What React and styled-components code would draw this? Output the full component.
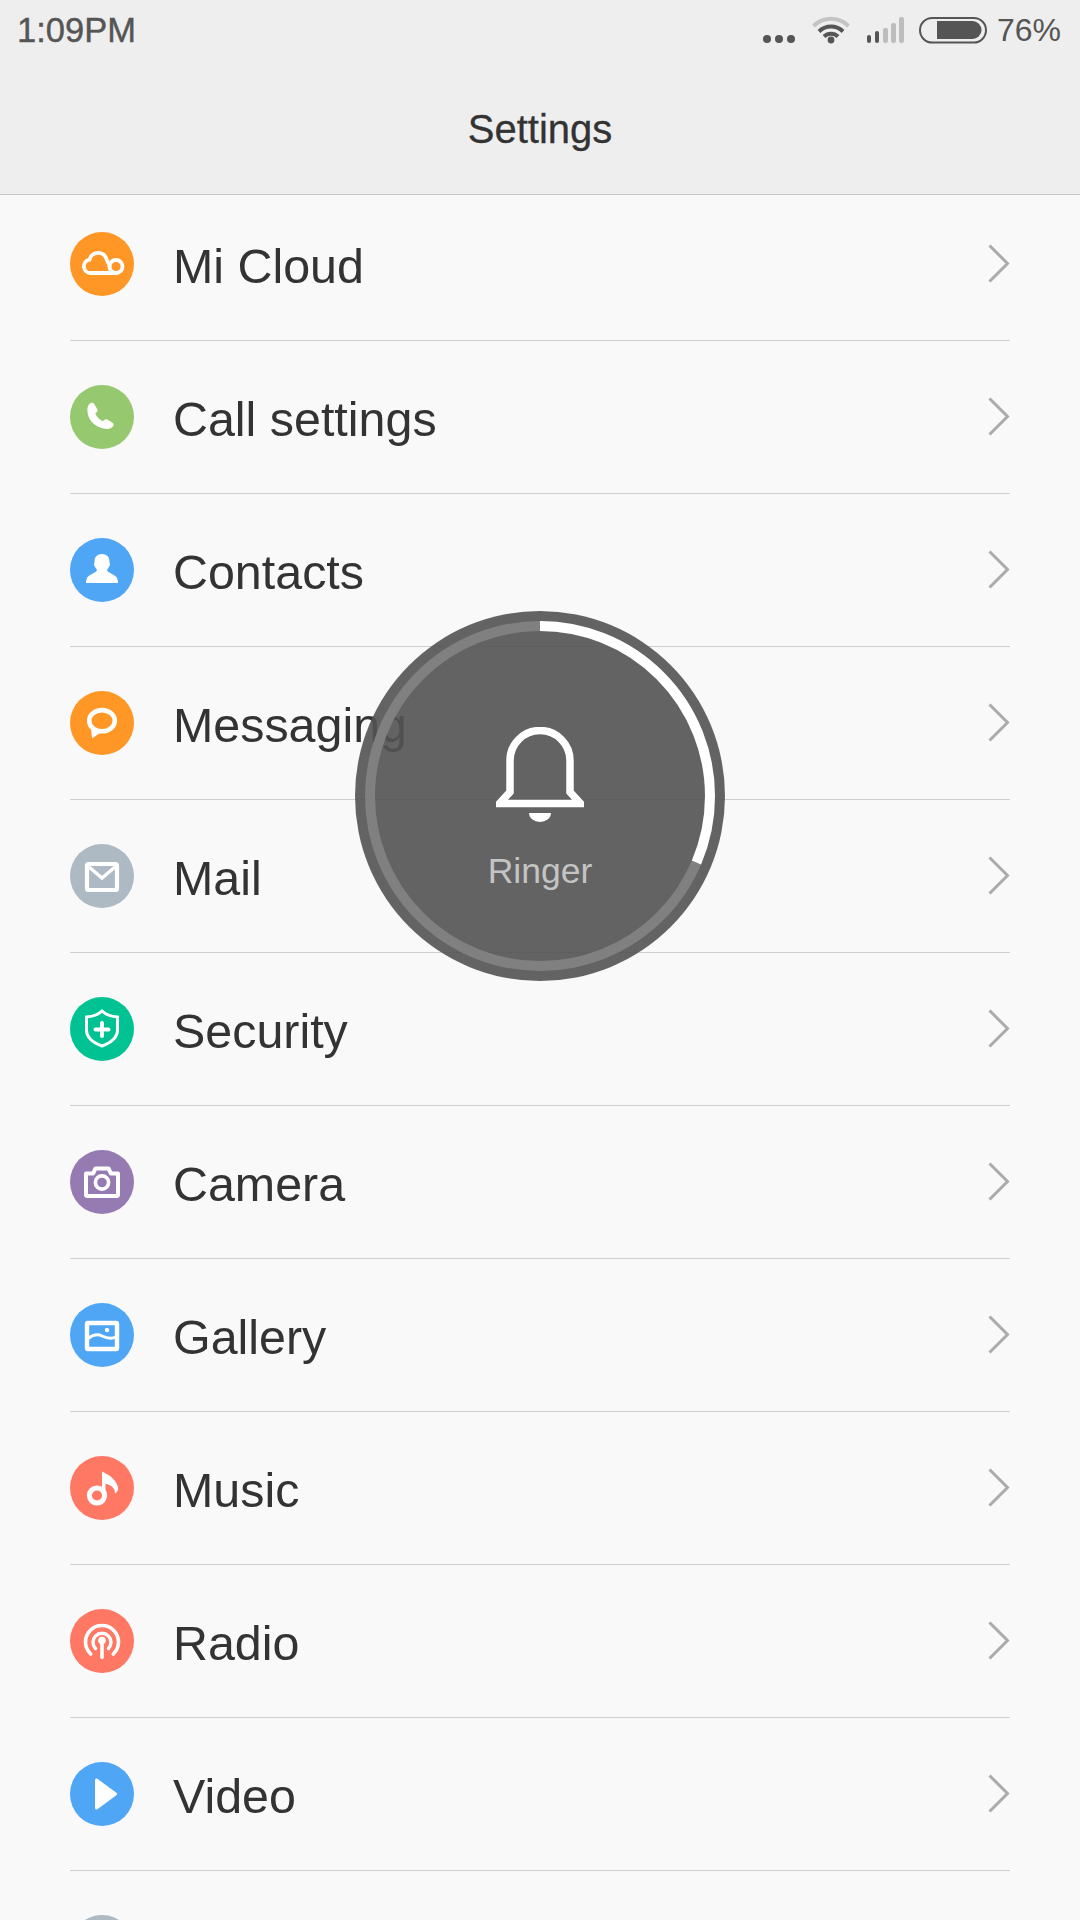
import React from "react";
import styled, { createGlobalStyle } from "styled-components";

const items = [
  { label: "Mi Cloud", color: "#ff9727", icon: "cloud" },
  { label: "Call settings", color: "#96c86f", icon: "phone" },
  { label: "Contacts", color: "#4fa6f5", icon: "contact" },
  { label: "Messaging", color: "#ff9727", icon: "message" },
  { label: "Mail", color: "#adb9c3", icon: "mail" },
  { label: "Security", color: "#00c292", icon: "shield" },
  { label: "Camera", color: "#967bb3", icon: "camera" },
  { label: "Gallery", color: "#4fa6f5", icon: "gallery" },
  { label: "Music", color: "#ff7864", icon: "music" },
  { label: "Radio", color: "#ff7864", icon: "radio" },
  { label: "Video", color: "#4fa6f5", icon: "video" },
  { label: "", color: "#adb9c3", icon: null },
];

const glyphs = {
  cloud: (
    <>
      <path
        d="M46 41H20.5A6.7 6.7 0 0 1 19.5 27.7A8.8 8.8 0 0 1 36.5 27C37 30 39.5 31 39.5 34.5"
        fill="none"
        stroke="#fff"
        strokeWidth="3.8"
        strokeLinecap="round"
      />
      <circle cx="46" cy="34.5" r="6.5" fill="none" stroke="#fff" strokeWidth="3.8" />
    </>
  ),
  phone: (
    <path
      d="M20 18.5c1.8-1.2 3.5-.9 4.4.7l2.9 5c.6 1.1.3 2.2-.6 3l-1.4 1.2c1.5 3.4 4 6 7.4 7.8l1.5-1.3c.9-.8 2.1-.9 3.1-.3l5.2 3.2c1.4.9 1.5 2.6.4 3.8-1.6 1.8-3.8 2.7-6.2 2.4C24 42.8 17 34 17.4 24c.1-2.3 1-4.2 2.6-5.5z"
      fill="#fff"
    />
  ),
  contact: (
    <path
      d="M32 16C36.5 16 39.5 19 39.5 23C39.5 24 39.4 25 39.8 25.6C40.4 26.4 40 27.6 39.2 28.2C38.8 29.4 38 30.4 37.4 31.2C36.8 32.4 37.4 33.4 38.6 34L45 37.8C46.2 38.6 47 39.6 47.4 41L48 43.4C48.2 44.4 47.7 45 46.8 45H17.2C16.3 45 15.8 44.4 16 43.4L16.6 41C17 39.6 17.8 38.6 19 37.8L25.4 34C26.6 33.4 27.2 32.4 26.6 31.2C26 30.4 25.2 29.4 24.8 28.2C24 27.6 23.6 26.4 24.2 25.6C24.6 25 24.5 24 24.5 23C24.5 19 27.5 16 32 16Z"
      fill="#fff"
    />
  ),
  message: (
    <>
      <ellipse cx="32" cy="29.7" rx="12.8" ry="10.6" fill="none" stroke="#fff" strokeWidth="4.6" />
      <path d="M21 37L22 47.5L30 42Z" fill="#fff" />
    </>
  ),
  mail: (
    <>
      <rect x="17" y="20" width="30" height="26" rx="1.5" fill="none" stroke="#fff" strokeWidth="4.2" />
      <path d="M19 23 L32 34 L45 23" fill="none" stroke="#fff" strokeWidth="3.4" />
    </>
  ),
  shield: (
    <>
      <path
        d="M32 14C28 18 22 19.5 16.5 20V33C16.5 41 24 46 32 49C40 46 47.5 41 47.5 33V20C42 19.5 36 18 32 14Z"
        fill="none"
        stroke="#fff"
        strokeWidth="3"
      />
      <path d="M25.5 32.5H38.5M32 26V39" stroke="#fff" strokeWidth="4" strokeLinecap="round" />
    </>
  ),
  camera: (
    <>
      <path
        d="M16 23.5H23L25.5 18.5H38.5L41 23.5H48V44.5A1.5 1.5 0 0 1 46.5 46H17.5A1.5 1.5 0 0 1 16 44.5Z"
        fill="none"
        stroke="#fff"
        strokeWidth="4"
        strokeLinejoin="round"
      />
      <circle cx="32" cy="32.5" r="6.6" fill="none" stroke="#fff" strokeWidth="3.6" />
    </>
  ),
  gallery: (
    <>
      <rect x="17" y="20" width="30" height="26" rx="1" fill="none" stroke="#fff" strokeWidth="4.4" />
      <circle cx="37" cy="27" r="2.2" fill="#fff" />
      <path d="M18 35.5C24 31 28 31 32 33C36 35 41 36.5 46 34" fill="none" stroke="#fff" strokeWidth="3" />
    </>
  ),
  music: (
    <>
      <circle cx="27" cy="39.5" r="7.6" fill="none" stroke="#fff" strokeWidth="5" />
      <path d="M32 39.5V15.5C40 19 46 24 48 31C48.6 34 47.5 36 45 37.5C45.4 32 40.5 29 35.5 27.5V39.5Z" fill="#fff" />
    </>
  ),
  radio: (
    <>
      <path d="M20.7 45A16.5 16.5 0 1 1 43.3 45" fill="none" stroke="#fff" strokeWidth="3.6" strokeLinecap="round" />
      <path d="M25.5 39.5A9 9 0 1 1 38.5 39.5" fill="none" stroke="#fff" strokeWidth="3.4" strokeLinecap="round" />
      <circle cx="32" cy="31.5" r="3.8" fill="#fff" />
      <path d="M32 32V48.5" stroke="#fff" strokeWidth="3.6" strokeLinecap="round" />
    </>
  ),
  video: <path d="M26.5 18V46L45.5 32Z" fill="#fff" stroke="#fff" strokeWidth="3" strokeLinejoin="round" />,
};

const GlobalStyle = createGlobalStyle`
  html, body {
    margin: 0;
    padding: 0;
    background: #f9f9f9;
  }
`;

const Screen = styled.div`
  position: relative;
  width: 1080px;
  height: 1920px;
  overflow: hidden;
  background: #f9f9f9;
  font-family: "Liberation Sans", Arial, sans-serif;
  color: #333;
`;

const Header = styled.header`
  position: relative;
  z-index: 1;
  box-sizing: border-box;
  height: 195px;
  background: #eeeeee;
  border-bottom: 1px solid #c6c6c6;
`;

const StatusBar = styled.div`
  display: flex;
  align-items: center;
  justify-content: space-between;
  height: 60px;
  padding: 0 19px 0 17px;
`;

const Clock = styled.span`
  font-size: 34.5px;
  color: #555;
  -webkit-text-stroke: 0.4px #555;
`;

const StatusIcons = styled.div`
  display: flex;
  align-items: center;
`;

const Percent = styled.span`
  margin-left: 10px;
  font-size: 32px;
  color: #555;
`;

const Title = styled.h1`
  margin: 0;
  padding-top: 40px;
  text-align: center;
  font-size: 40px;
  font-weight: 400;
  line-height: 58px;
  color: #333;
  -webkit-text-stroke: 0.3px #333;
`;

const List = styled.ul`
  list-style: none;
  margin: -7px 0 0;
  padding: 0 70px;
`;

const Row = styled.li`
  box-sizing: border-box;
  display: flex;
  align-items: center;
  height: 153px;
  border-bottom: 1px solid #cfcfcf;
`;

const Badge = styled.span`
  flex: none;
  width: 64px;
  height: 64px;
  border-radius: 50%;
  background: ${({ $color }) => $color};
  svg {
    display: block;
  }
`;

const Label = styled.span`
  flex: 1;
  margin-left: 39px;
  padding-top: 3px;
  font-size: 48.4px;
  color: #333;
`;

const Chevron = styled.svg`
  flex: none;
  display: block;
`;

const Dial = styled.div`
  position: absolute;
  left: 355px;
  top: 611px;
  z-index: 2;
  width: 370px;
  height: 370px;
  border-radius: 50%;
  background: rgba(83, 83, 83, 0.91);
  display: flex;
  flex-direction: column;
  align-items: center;
`;

const DialRing = styled.svg`
  position: absolute;
  left: 0;
  top: 0;
`;

const Bell = styled.svg`
  display: block;
  margin-top: 116px;
`;

const DialLabel = styled.span`
  margin-top: 28px;
  font-size: 35.5px;
  color: #c4c4c4;
`;

const ringLength = 2 * Math.PI * 170;
const ringValue = 113 / 360;

const App = () => {
  return (
    <Screen>
      <GlobalStyle />
      <Header>
        <StatusBar>
          <Clock>1:09PM</Clock>
          <StatusIcons>
            <svg width="224" height="60" viewBox="0 0 224 60">
              <g fill="#555">
                <circle cx="4" cy="39" r="4" />
                <circle cx="16" cy="39" r="4" />
                <circle cx="28" cy="39" r="4" />
              </g>
              <g fill="none" strokeLinecap="butt">
                <path d="M50.5 26A25 25 0 0 1 85.5 26" stroke="#c4c4c4" strokeWidth="4" />
                <path d="M56 31.5A17 17 0 0 1 80 31.5" stroke="#555" strokeWidth="4" />
                <path d="M61 36.5A10 10 0 0 1 75 36.5" stroke="#555" strokeWidth="4" />
              </g>
              <circle cx="68" cy="40" r="3.4" fill="#555" />
              <g>
                <rect x="104" y="35" width="4" height="8" rx="2" fill="#555" />
                <rect x="112" y="31" width="4" height="12" rx="2" fill="#555" />
                <rect x="120" y="28" width="5" height="15" rx="2" fill="#bdbdbd" />
                <rect x="128" y="23" width="5" height="20" rx="2" fill="#bdbdbd" />
                <rect x="136" y="17" width="5" height="26" rx="2" fill="#bdbdbd" />
              </g>
              <rect x="157" y="18" width="66" height="24.5" rx="12.2" fill="none" stroke="#555" strokeWidth="2" />
              <path d="M174 21H209.5A9 9 0 0 1 209.5 39H174Z" fill="#555" />
            </svg>
            <Percent>76%</Percent>
          </StatusIcons>
        </StatusBar>
        <Title>Settings</Title>
      </Header>

      <List>
        {items.map((item, i) => (
          <Row key={i}>
            <Badge $color={item.color}>
              {item.icon && (
                <svg width="64" height="64" viewBox="0 0 64 64">
                  {glyphs[item.icon]}
                </svg>
              )}
            </Badge>
            <Label>{item.label}</Label>
            <Chevron width="22" height="40" viewBox="0 0 22 40">
              <path d="M1.5 1.5L19.5 19.5L1.5 37.5" fill="none" stroke="#ababab" strokeWidth="3" />
            </Chevron>
          </Row>
        ))}
      </List>

      <Dial>
        <DialRing width="370" height="370" viewBox="0 0 370 370">
          <circle cx="185" cy="185" r="170" fill="none" stroke="#808080" strokeWidth="10" />
          <circle
            cx="185"
            cy="185"
            r="170"
            fill="none"
            stroke="#fff"
            strokeWidth="10"
            strokeDasharray={`${ringLength * ringValue} ${ringLength}`}
            transform="rotate(-90 185 185)"
          />
        </DialRing>
        <Bell width="88" height="96" viewBox="0 0 88 96">
          <path
            d="M14 65V33.5A30 30 0 0 1 74 33.5V65L84.5 76.5H3.5L14 65Z"
            fill="none"
            stroke="#fff"
            strokeWidth="7.5"
          />
          <path d="M33 86H55A11 9 0 0 1 33 86Z" fill="#fff" />
        </Bell>
        <DialLabel>Ringer</DialLabel>
      </Dial>
    </Screen>
  );
};

export default App;
